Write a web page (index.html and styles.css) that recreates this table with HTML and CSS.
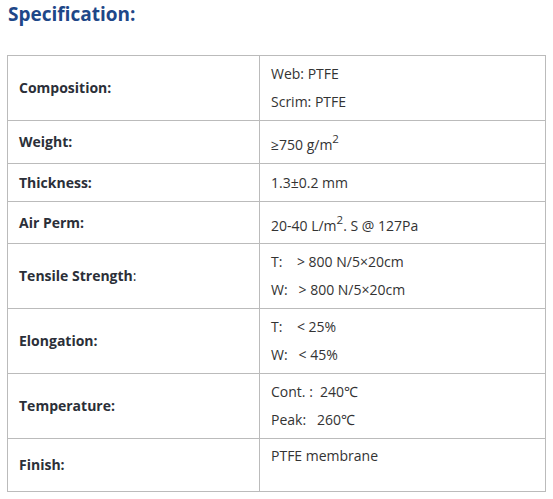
FILE: index.html
```html
<!DOCTYPE html>
<html>
<head>
<meta charset="utf-8">
<link rel="stylesheet" href="styles.css">
</head>
<body>
<div class="page">
  <h2 class="title">Specification:</h2>
  <table class="spec">
    <tr class="r2">
      <td class="label"><b>Composition:</b></td>
      <td class="value">Web: PTFE<br>Scrim: PTFE</td>
    </tr>
    <tr class="rsup">
      <td class="label"><b>Weight:</b></td>
      <td class="value sup-cell">≥750 g/m<sup>2</sup></td>
    </tr>
    <tr class="r1">
      <td class="label"><b>Thickness:</b></td>
      <td class="value">1.3±0.2 mm</td>
    </tr>
    <tr class="rsup2">
      <td class="label"><b>Air Perm:</b></td>
      <td class="value sup-cell">20-40 L/m<sup>2</sup>. S @ 127Pa</td>
    </tr>
    <tr class="r2">
      <td class="label"><b>Tensile Strength</b>:</td>
      <td class="value">T:&nbsp;&nbsp;&nbsp; &gt; 800 N/5×20cm<br>W:&nbsp;&nbsp; &gt; 800 N/5×20cm</td>
    </tr>
    <tr class="r2">
      <td class="label"><b>Elongation:</b></td>
      <td class="value">T:&nbsp;&nbsp;&nbsp; &lt; 25%<br>W:&nbsp;&nbsp; &lt; 45%</td>
    </tr>
    <tr class="r2">
      <td class="label"><b>Temperature:</b></td>
      <td class="value">Cont. :&nbsp; 240℃<br>Peak:&nbsp;&nbsp; 260℃</td>
    </tr>
    <tr class="rlast">
      <td class="label"><b>Finish:</b></td>
      <td class="value last">PTFE membrane</td>
    </tr>
  </table>
</div>
</body>
</html>
```
FILE: styles.css
```css
html, body {
  margin: 0;
  padding: 0;
  background: #fff;
}
.page {
  padding: 2px 7px;
  font-family: "Open Sans", "Noto Sans", sans-serif;
  font-size: 14px;
  color: #333;
}
.title {
  margin: 0 0 29px 1px;
  font-size: 19px;
  line-height: 24px;
  font-weight: 700;
  color: #1e4788;
}
.spec {
  border-collapse: collapse;
  width: 539px;
}
.spec td {
  border: 1px solid #bbb;
  padding: 0 11px;
  line-height: 28px;
  vertical-align: middle;
}
.spec td.label {
  width: 229px;
  color: #2b2f38;
}
.spec tr.r2 { height: 65px; }
.spec tr.r1 { height: 38px; }
.spec tr.rsup { height: 43px; }
.spec tr.rsup2 { height: 42px; }
.spec tr.rlast { height: 53px; }
.spec sup {
  font-size: 11.5px;
  line-height: 0;
  vertical-align: 7px;
}
.spec td.sup-cell {
  padding-top: 6px;
}
.spec td.last {
  padding-bottom: 19px;
}
```
